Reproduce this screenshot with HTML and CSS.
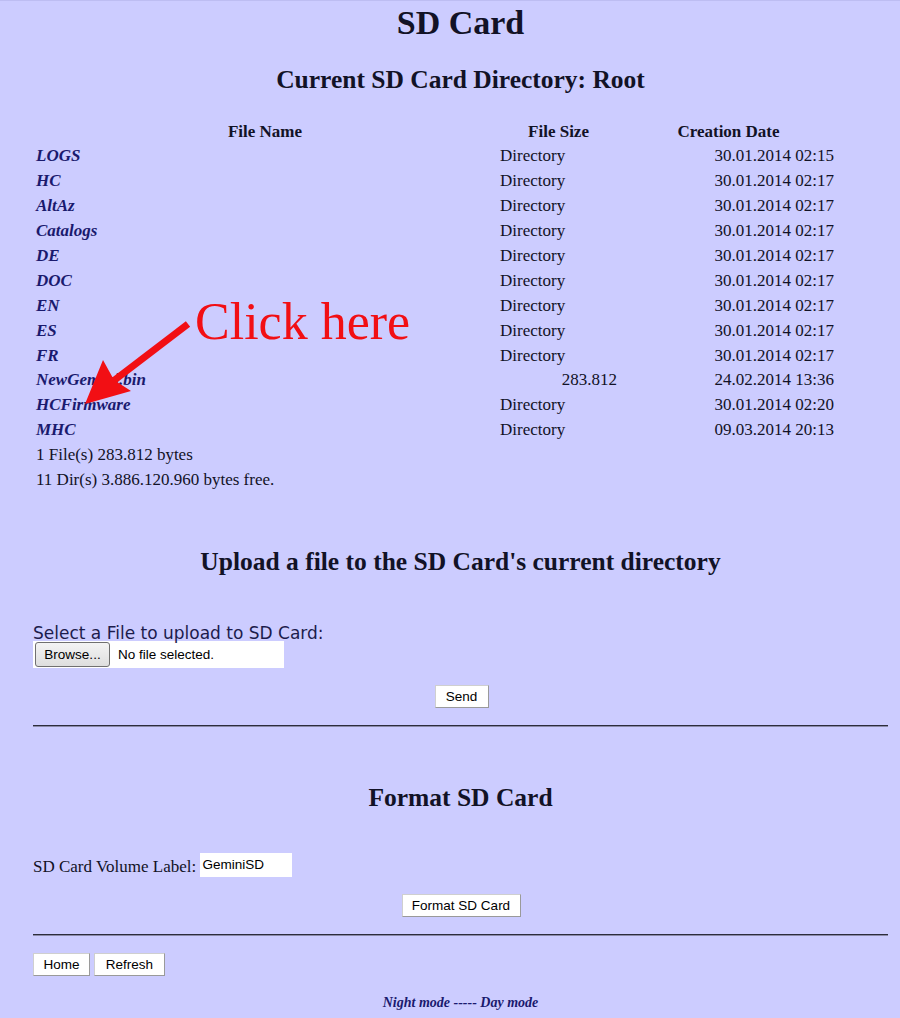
FILE: index.html
```html
<!DOCTYPE html>
<html>
<head>
<meta charset="utf-8">
<title>SD Card</title>
<link rel="stylesheet" href="styles.css">
</head>
<body>
<div class="page">
  <h1 class="title">SD Card</h1>
  <h2 class="head dir-head">Current SD Card Directory: Root</h2>
  <table class="files">
    <colgroup><col class="c-name"><col class="c-size"><col class="c-date"></colgroup>
    <thead>
      <tr><th>File Name</th><th>File Size</th><th>Creation Date</th></tr>
    </thead>
    <tbody>
      <tr><td><a class="dir" href="#">LOGS</a></td><td>Directory</td><td class="date">30.01.2014 02:15</td></tr>
      <tr><td><a class="dir" href="#">HC</a></td><td>Directory</td><td class="date">30.01.2014 02:17</td></tr>
      <tr><td><a class="dir" href="#">AltAz</a></td><td>Directory</td><td class="date">30.01.2014 02:17</td></tr>
      <tr><td><a class="dir" href="#">Catalogs</a></td><td>Directory</td><td class="date">30.01.2014 02:17</td></tr>
      <tr><td><a class="dir" href="#">DE</a></td><td>Directory</td><td class="date">30.01.2014 02:17</td></tr>
      <tr><td><a class="dir" href="#">DOC</a></td><td>Directory</td><td class="date">30.01.2014 02:17</td></tr>
      <tr><td><a class="dir" href="#">EN</a></td><td>Directory</td><td class="date">30.01.2014 02:17</td></tr>
      <tr><td><a class="dir" href="#">ES</a></td><td>Directory</td><td class="date">30.01.2014 02:17</td></tr>
      <tr><td><a class="dir" href="#">FR</a></td><td>Directory</td><td class="date">30.01.2014 02:17</td></tr>
      <tr><td><a class="dir" href="#">NewGemini.bin</a></td><td class="num">283.812</td><td class="date">24.02.2014 13:36</td></tr>
      <tr><td><a class="dir" href="#">HCFirmware</a></td><td>Directory</td><td class="date">30.01.2014 02:20</td></tr>
      <tr><td><a class="dir" href="#">MHC</a></td><td>Directory</td><td class="date">09.03.2014 20:13</td></tr>
      <tr><td colspan="3">1 File(s) 283.812 bytes</td></tr>
      <tr><td colspan="3">11 Dir(s) 3.886.120.960 bytes free.</td></tr>
    </tbody>
  </table>

  <h2 class="head upload-head">Upload a file to the SD Card's current directory</h2>
  <div class="select-label">Select a File to upload to SD Card:</div>
  <div class="file-input"><span class="browse">Browse...</span><span class="nofile">No file selected.</span></div>
  <div class="center-row"><button class="btn send">Send</button></div>
  <div class="rule rule-1"></div>

  <h2 class="head format-head">Format SD Card</h2>
  <div class="label-row"><span class="vol-label">SD Card Volume Label:&nbsp;</span><span class="text-input">GeminiSD</span></div>
  <div class="center-row fmt-row"><button class="btn fmt">Format SD Card</button></div>
  <div class="rule rule-2"></div>

  <div class="nav-row"><button class="btn home">Home</button><button class="btn refresh">Refresh</button></div>
  <div class="modes"><a href="#" class="mode">Night mode</a> ----- <a href="#" class="mode">Day mode</a></div>
</div>

<div class="click-here">Click here</div>
<svg class="arrow" width="900" height="500" viewBox="0 0 900 500" xmlns="http://www.w3.org/2000/svg">
  <line x1="188" y1="323" x2="112" y2="381" stroke="#f20f14" stroke-width="7"/>
  <polygon points="85,403 103,359 114,379 131,390" fill="#f20f14"/>
</svg>
</body>
</html>
```
FILE: styles.css
```css
html, body {
  margin: 0;
  padding: 0;
  background: #ccccff;
}
body {
  position: relative;
  font-family: "Liberation Serif", "Times New Roman", serif;
  font-size: 17px;
  color: #121226;
  min-height: 1018px;
  border-top: 1px solid #bdbdf2;
  box-sizing: border-box;
}
.page {
  margin-left: 33px;
  width: 855px;
  display: flow-root;
}
.title {
  margin: 2px 0 0;
  font-size: 34px;
  line-height: 40px;
  text-align: center;
  font-weight: bold;
}
.head {
  font-size: 25.5px;
  line-height: 30px;
  text-align: center;
  font-weight: bold;
  margin: 0;
}
.dir-head { margin-top: 22px; }
.files {
  margin-top: 24px;
  width: 804px;
  table-layout: fixed;
  border-collapse: collapse;
  border-spacing: 0;
}
.c-name { width: 464px; }
.c-size { width: 123px; }
.c-date { width: 217px; }
.files th {
  padding: 0 3px;
  line-height: 25.3px;
  font-weight: bold;
  text-align: center;
}
.files td {
  padding: 0 3px;
  line-height: 24.9px;
  text-align: left;
  white-space: nowrap;
}
.files td.num { text-align: right; }
.files td.date { text-align: right; }
.dir {
  color: #1a1a6e;
  font-weight: bold;
  font-style: italic;
  text-decoration: none;
}
.upload-head { margin-top: 54.5px; }
.select-label {
  margin-top: 47.6px;
  font-family: "DejaVu Sans", Verdana, sans-serif;
  font-size: 17px;
  line-height: 16px;
  color: #1c1c4c;
}
.file-input {
  margin-top: 0;
  width: 251px;
  height: 27px;
  background: #ffffff;
  display: flex;
  align-items: center;
  font-family: "Liberation Sans", Arial, sans-serif;
  font-size: 13.5px;
  color: #000;
}
.browse {
  margin-left: 2px;
  width: 75px;
  height: 25px;
  box-sizing: border-box;
  border: 1px solid #707070;
  border-radius: 3px;
  background: linear-gradient(#f4f4f4, #dedede);
  display: flex;
  align-items: center;
  justify-content: center;
}
.nofile { margin-left: 8px; }
.center-row {
  margin-top: 17px;
  display: flex;
  justify-content: center;
}
.btn {
  height: 23px;
  box-sizing: border-box;
  background: #ffffff;
  border: 1px solid #cfcfcf;
  border-right-color: #9a9a9a;
  border-bottom-color: #9a9a9a;
  font-family: "Liberation Sans", Arial, sans-serif;
  font-size: 13.5px;
  color: #000;
  padding: 0;
  margin: 0;
}
.send { width: 54px; margin-left: 2px; }
.rule {
  height: 0;
  border-top: 1px solid #2c2c3c;
  border-bottom: 1px solid #8a8aa8;
}
.rule-1 { margin-top: 16.5px; }
.format-head { margin-top: 56.5px; }
.label-row {
  margin-top: 40px;
  display: flex;
  align-items: center;
  height: 24px;
}
.vol-label {
  line-height: 20px;
  padding-top: 4px;
}
.text-input {
  width: 92px;
  height: 24px;
  box-sizing: border-box;
  background: #fff;
  padding-left: 2px;
  font-family: "Liberation Sans", Arial, sans-serif;
  font-size: 13.5px;
  line-height: 24px;
  color: #000;
}
.fmt { width: 119px; margin-left: 1px; }
.rule-2 { margin-top: 16.5px; }
.nav-row {
  margin-top: 17.5px;
  display: flex;
  gap: 4px;
}
.home { width: 57px; }
.refresh { width: 71px; }
.modes {
  margin-top: 18.3px;
  text-align: center;
  font-size: 14px;
  line-height: 18px;
  font-weight: bold;
  font-style: italic;
  color: #1a1a6e;
}
.mode {
  color: #1a1a6e;
  text-decoration: none;
}
.click-here {
  position: absolute;
  left: 195px;
  top: 295px;
  font-family: "Liberation Serif", "Times New Roman", serif;
  font-size: 52px;
  line-height: 52px;
  color: #f20f14;
  white-space: nowrap;
}
.arrow {
  position: absolute;
  left: 0;
  top: 0;
  pointer-events: none;
}
```
